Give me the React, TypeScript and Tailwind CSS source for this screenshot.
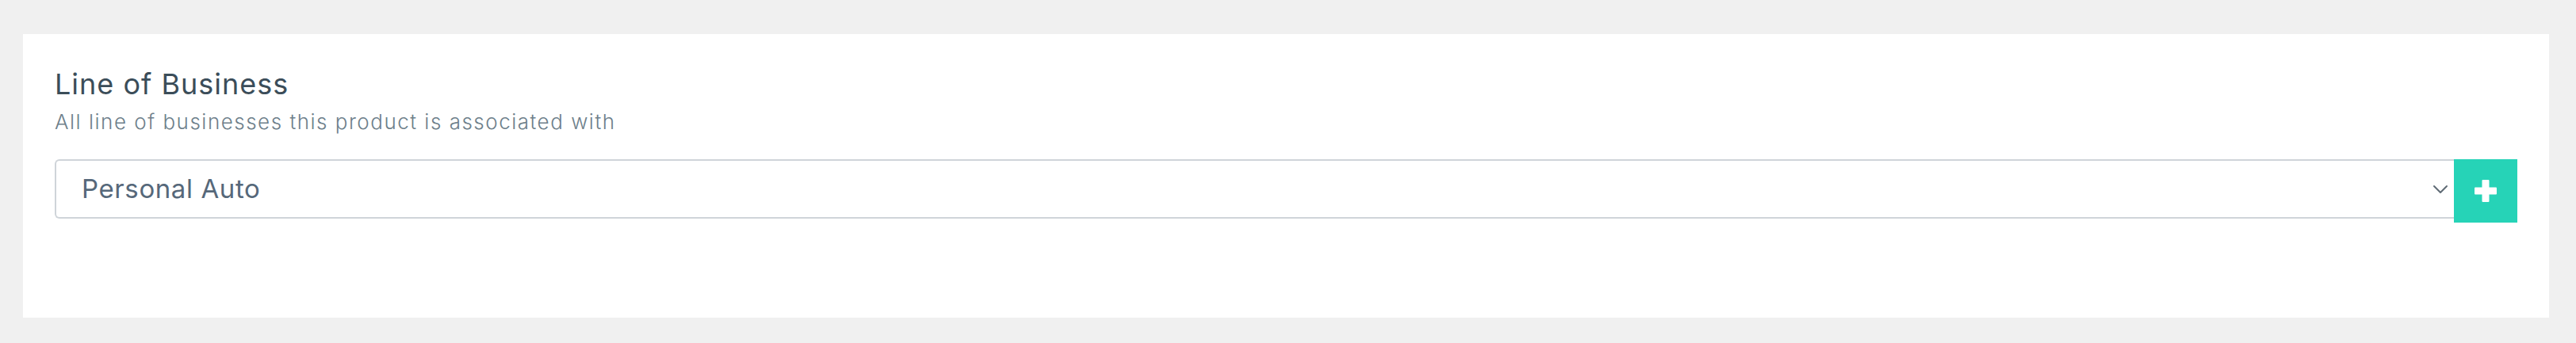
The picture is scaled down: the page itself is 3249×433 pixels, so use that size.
const font = { fontFamily: "Inter, 'Open Sans', sans-serif" };

function PlusIcon() {
	return (
		<svg width="28" height="28" viewBox="0 0 28 28" aria-hidden="true">
			<rect x="9.5" y="0" width="9" height="28" rx="1" fill="#ffffff" />
			<rect x="0" y="9.5" width="28" height="9" rx="1" fill="#ffffff" />
		</svg>
	);
}

function Chevron() {
	return (
		<svg width="20" height="12" viewBox="0 0 20 12" aria-hidden="true">
			<polyline
				points="2,2 10,10 18,2"
				fill="none"
				stroke="#5f6b75"
				strokeWidth="2"
				strokeLinecap="round"
				strokeLinejoin="round"
			/>
		</svg>
	);
}

export default function App() {
	return (
		<div
			className="min-h-[433px] bg-[#f0f0f0] pt-[43px] pl-[29px] pr-[34px]"
			style={font}
		>
			<section className="h-[358px] bg-white px-[40px] pt-[41px]">
				<h2 className="text-[36px] leading-[44px] font-normal tracking-[1px] text-[#3b4d59]">
					Line of Business
				</h2>
				<p className="mt-[10px] text-[26px] leading-[32px] font-light tracking-[1.5px] text-[#6e7f8b]">
					All line of businesses this product is associated with
				</p>
				<div className="mt-[31px] flex items-start">
					<div
						role="combobox"
						className="flex h-[75px] flex-1 items-center justify-between rounded-l-[6px] border-2 border-r-0 border-[#cfd4d9] pl-[32px] pr-[7px]"
					>
						<span className="text-[33px] font-normal tracking-[0.6px] text-[#56687a]">
							Personal Auto
						</span>
						<Chevron />
					</div>
					<button
						type="button"
						className="flex h-[80px] w-[80px] items-center justify-center bg-[#26d3b7]"
					>
						<PlusIcon />
					</button>
				</div>
			</section>
		</div>
	);
}
